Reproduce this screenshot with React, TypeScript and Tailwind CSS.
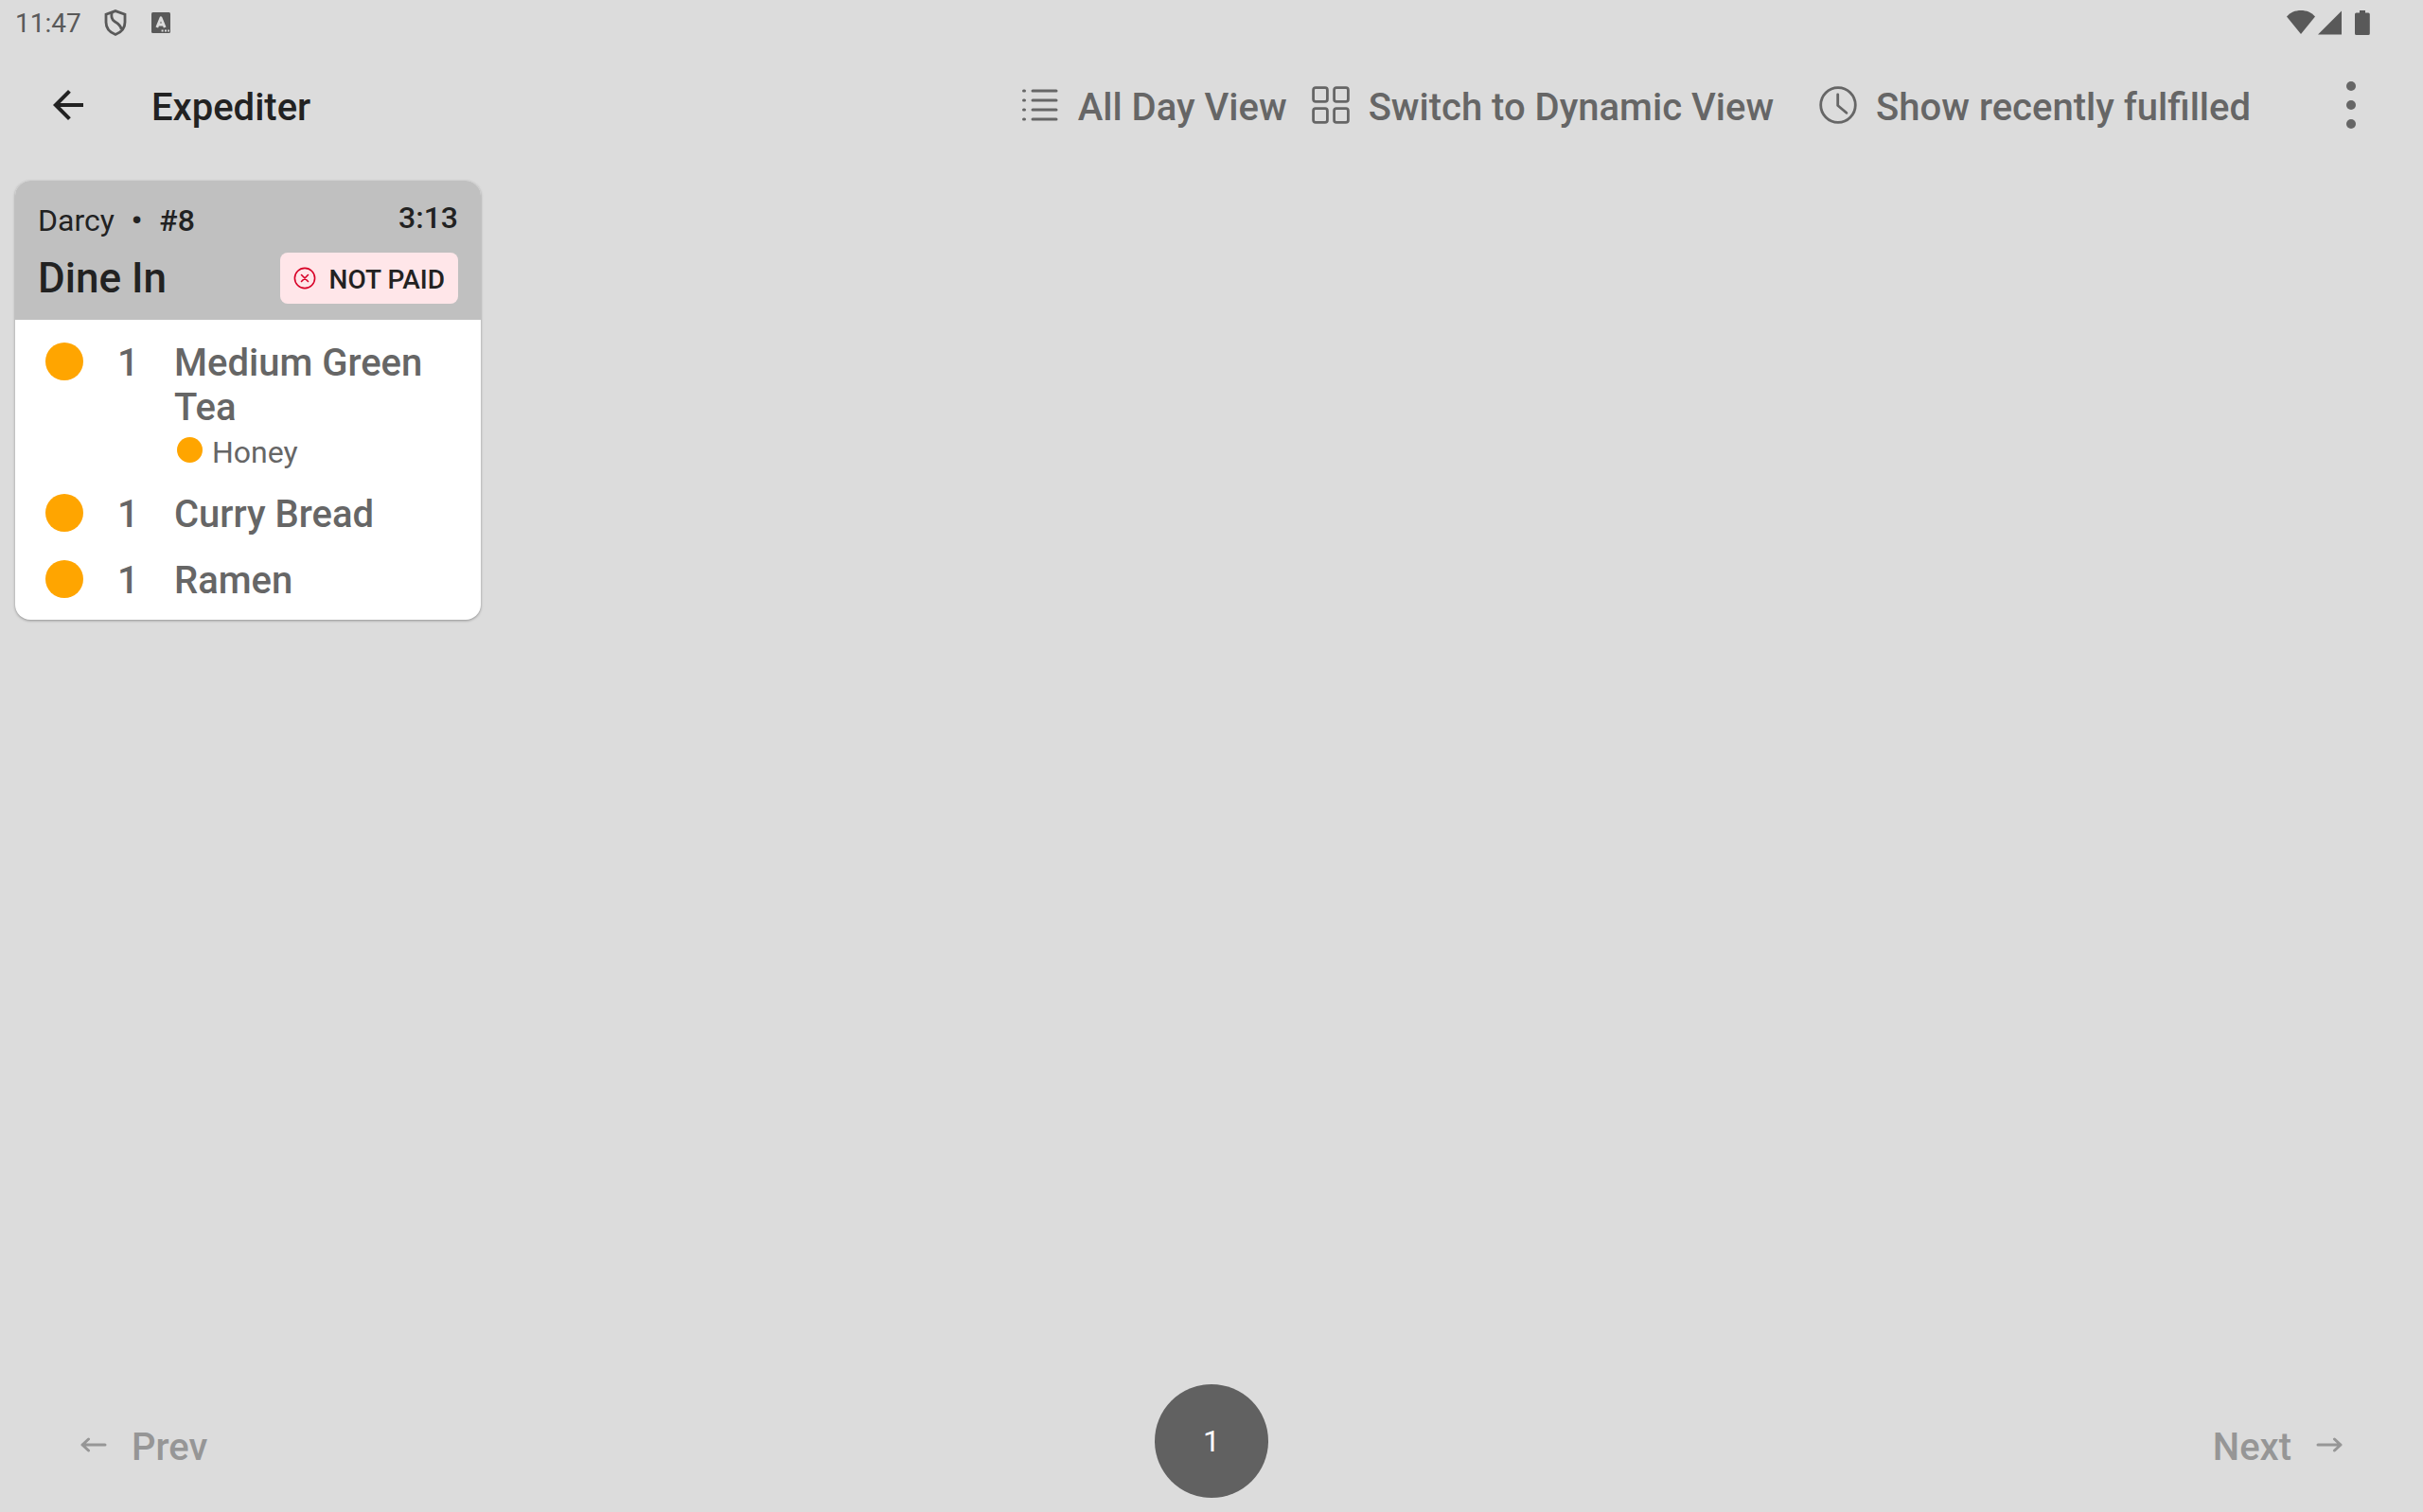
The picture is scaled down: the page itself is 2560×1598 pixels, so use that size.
import { ReactNode } from "react";

type OrderItem = {
  id: number;
  qty: number;
  name: string;
  modifiers?: string[];
};

type Order = {
  id: number;
  customer: string;
  elapsed: string;
  type: string;
  paid: boolean;
  items: OrderItem[];
};

const ORDERS: Order[] = [
  {
    id: 8,
    customer: "Darcy",
    elapsed: "3:13",
    type: "Dine In",
    paid: false,
    items: [
      { id: 1, qty: 1, name: "Medium Green Tea", modifiers: ["Honey"] },
      { id: 2, qty: 1, name: "Curry Bread" },
      { id: 3, qty: 1, name: "Ramen" },
    ],
  },
];

function ListIcon() {
  return (
    <svg width="40" height="40" viewBox="0 0 40 40" fill="none" stroke="currentColor" strokeWidth="3" strokeLinecap="round">
      <path d="M2.5 5h1M2.5 15h1M2.5 25h1M2.5 35h1" />
      <path d="M12 5h25M12 15h25M12 25h25M12 35h25" />
    </svg>
  );
}

function GridIcon() {
  return (
    <svg width="40" height="40" viewBox="0 0 40 40" fill="none" stroke="currentColor" strokeWidth="2.8">
      <rect x="1.6" y="1.6" width="14.8" height="14.8" rx="2.4" />
      <rect x="23.6" y="1.6" width="14.8" height="14.8" rx="2.4" />
      <rect x="1.6" y="23.6" width="14.8" height="14.8" rx="2.4" />
      <rect x="23.6" y="23.6" width="14.8" height="14.8" rx="2.4" />
    </svg>
  );
}

function ClockIcon() {
  return (
    <svg width="40" height="40" viewBox="0 0 40 40" fill="none" stroke="currentColor" strokeWidth="2.8" strokeLinecap="round" strokeLinejoin="round">
      <circle cx="20" cy="20" r="18.3" />
      <path d="M19.7 8.8v11.7l9.2 7.8" />
    </svg>
  );
}

function PagerArrow({ right }: { right?: boolean }) {
  return (
    <svg width="28" height="16" viewBox="0 0 28 16" fill="none" stroke="currentColor" strokeWidth="3" strokeLinecap="round" strokeLinejoin="round">
      {right ? <path d="M2 8h24M19.500 2L26 8L19.500 14" /> : <path d="M26 8h-24M8.500 2L2 8L8.500 14" />}
    </svg>
  );
}

function StatusBar() {
  return (
    <div className="flex h-12 items-center justify-between pl-4 pr-14 text-[#595959]">
      <div className="flex items-center">
        <span className="text-[28px] leading-[33px]">11:47</span>
        <svg className="ml-6" width="24" height="28" viewBox="0 0 24 28" fill="none" stroke="currentColor" strokeWidth="2.8">
          <path d="M12 1.6L22 5.2v8.3c0 6-4.2 10.8-10 13c-5.8-2.2-10-7-10-13V5.2z" />
          <path d="M8.2 3.4c-1.2 4.6-.4 7.2 3 9.4c4 2.4 6.8 4.4 7 8.4" />
        </svg>
        <svg className="ml-[26px]" width="20" height="22" viewBox="0 0 20 22">
          <rect width="20" height="22" rx="1.5" fill="currentColor" />
          <path d="M5.8 16L10 5.8L14.2 16M7.5 13h5" fill="none" stroke="#dcdcdc" strokeWidth="2.8" strokeLinejoin="round" />
          <path d="M10.600 19.500h2M14 19.500h2M17.200 19.500h1.800" stroke="#dcdcdc" strokeWidth="1.8" />
        </svg>
      </div>
      <svg width="90" height="28" viewBox="0 0 90 28" fill="currentColor">
        <path d="M2 7.5C6 3 11 1 17 1s11 2 15 6.5L17 26z" />
        <path d="M35 26.5L60 1.5v25z" />
        <path d="M79 1h6v2.5h3.2a1.6 1.6 0 0 1 1.6 1.6v20.3a1.6 1.6 0 0 1-1.6 1.6H75.6a1.6 1.6 0 0 1-1.6-1.6V5.1a1.6 1.6 0 0 1 1.6-1.6H79z" />
      </svg>
    </div>
  );
}

function BarAction({ icon, label }: { icon: ReactNode; label: string }) {
  return (
    <button className="flex items-center gap-5 whitespace-nowrap">
      {icon}
      <span className="pt-1">{label}</span>
    </button>
  );
}

function AppBar() {
  return (
    <header className="flex h-[126px] items-center pl-12 pr-[52px] text-[40px] leading-[47px] font-medium text-[#666666]">
      <button aria-label="Back" className="text-[#222222]">
        <svg width="48" height="48" viewBox="0 0 24 24" fill="currentColor">
          <path d="M20 11H7.83l5.59-5.59L12 4l-8 8l8 8l1.41-1.41L7.83 13H20z" />
        </svg>
      </button>
      <h1 className="ml-16 pt-1 text-[#222222]">Expediter</h1>
      <nav className="ml-auto flex items-center">
        <BarAction icon={<ListIcon />} label="All Day View" />
        <div className="ml-[26px]">
          <BarAction icon={<GridIcon />} label="Switch to Dynamic View" />
        </div>
        <div className="ml-12">
          <BarAction icon={<ClockIcon />} label="Show recently fulfilled" />
        </div>
        <button aria-label="More options" className="ml-[82px]">
          <svg width="48" height="60" viewBox="0 0 48 60" fill="currentColor">
            <circle cx="24" cy="10" r="5" />
            <circle cx="24" cy="30" r="5" />
            <circle cx="24" cy="50" r="5" />
          </svg>
        </button>
      </nav>
    </header>
  );
}

function OrderCard({ order }: { order: Order }) {
  return (
    <article className="overflow-hidden rounded-2xl bg-white shadow-[0_1px_3px_rgba(0,0,0,0.35)]">
      <div className="flex flex-col gap-[15px] bg-[#c0c0c0] pt-5 pr-6 pb-[17px] pl-6 text-[#222222]">
        <div className="flex items-start justify-between text-[32px] leading-[38px]">
          <div className="flex pt-[3px]">
            <span>{order.customer}</span>
            <span className="mx-[18px] font-bold">•</span>
            <span className="font-medium">#{order.id}</span>
          </div>
          <span className="font-medium">{order.elapsed}</span>
        </div>
        <div className="flex items-center justify-between font-medium">
          <h2 className="text-[44px] leading-[52px]">{order.type}</h2>
          {!order.paid && (
            <span className="flex h-[54px] items-center gap-3.5 rounded-lg bg-[#ffe6e9] px-3.5 text-[28px] leading-[33px]">
              <svg width="24" height="24" viewBox="0 0 24 24" fill="none" stroke="#d80027" strokeWidth="1.6" strokeLinecap="round">
                <circle cx="12" cy="12" r="10.6" />
                <path d="M8.5 8.5l7 7M15.5 8.5l-7 7" />
              </svg>
              <span className="pt-0.5">NOT PAID</span>
            </span>
          )}
        </div>
      </div>
      <ul className="flex flex-col gap-[23px] pt-[22px] pr-6 pb-[18px] pl-8 text-[#666666]">
        {order.items.map((item) => (
          <li key={item.id} className="flex text-[40px] leading-[47px] font-medium">
            <span className="mt-0.5 size-10 shrink-0 rounded-full bg-[#ffa500]" />
            <span className="ml-9 w-[60px] shrink-0">{item.qty}</span>
            <div>
              <p>{item.name}</p>
              {item.modifiers?.map((mod) => (
                <p key={mod} className="mt-[5px] flex gap-2.5 pl-[3px] text-[32px] leading-[38px] font-normal">
                  <span className="mt-[3px] size-[27px] rounded-full bg-[#ffa500]" />
                  {mod}
                </p>
              ))}
            </div>
          </li>
        ))}
      </ul>
    </article>
  );
}

function Pager() {
  return (
    <footer className="grid grid-cols-3 items-center px-[85px] py-[15px] text-[40px] leading-[47px] font-medium text-[#969696]">
      <button disabled className="flex items-center gap-[26px] justify-self-start pt-2">
        <PagerArrow />
        <span className="pt-1">Prev</span>
      </button>
      <span className="flex size-[120px] items-center justify-center justify-self-center rounded-full bg-[#616161] text-[32px] leading-[38px] font-normal text-white">
        1
      </span>
      <button disabled className="flex items-center gap-[26px] justify-self-end pt-2">
        <span className="pt-1">Next</span>
        <PagerArrow right />
      </button>
    </footer>
  );
}

export default function App() {
  return (
    <div className="flex min-h-screen flex-col bg-[#dcdcdc] font-[Roboto,sans-serif]">
      <StatusBar />
      <AppBar />
      <main className="grid flex-1 grid-cols-[repeat(auto-fill,492px)] content-start gap-4 px-4 pt-[17px]">
        {ORDERS.map((order) => (
          <OrderCard key={order.id} order={order} />
        ))}
      </main>
      <Pager />
    </div>
  );
}
